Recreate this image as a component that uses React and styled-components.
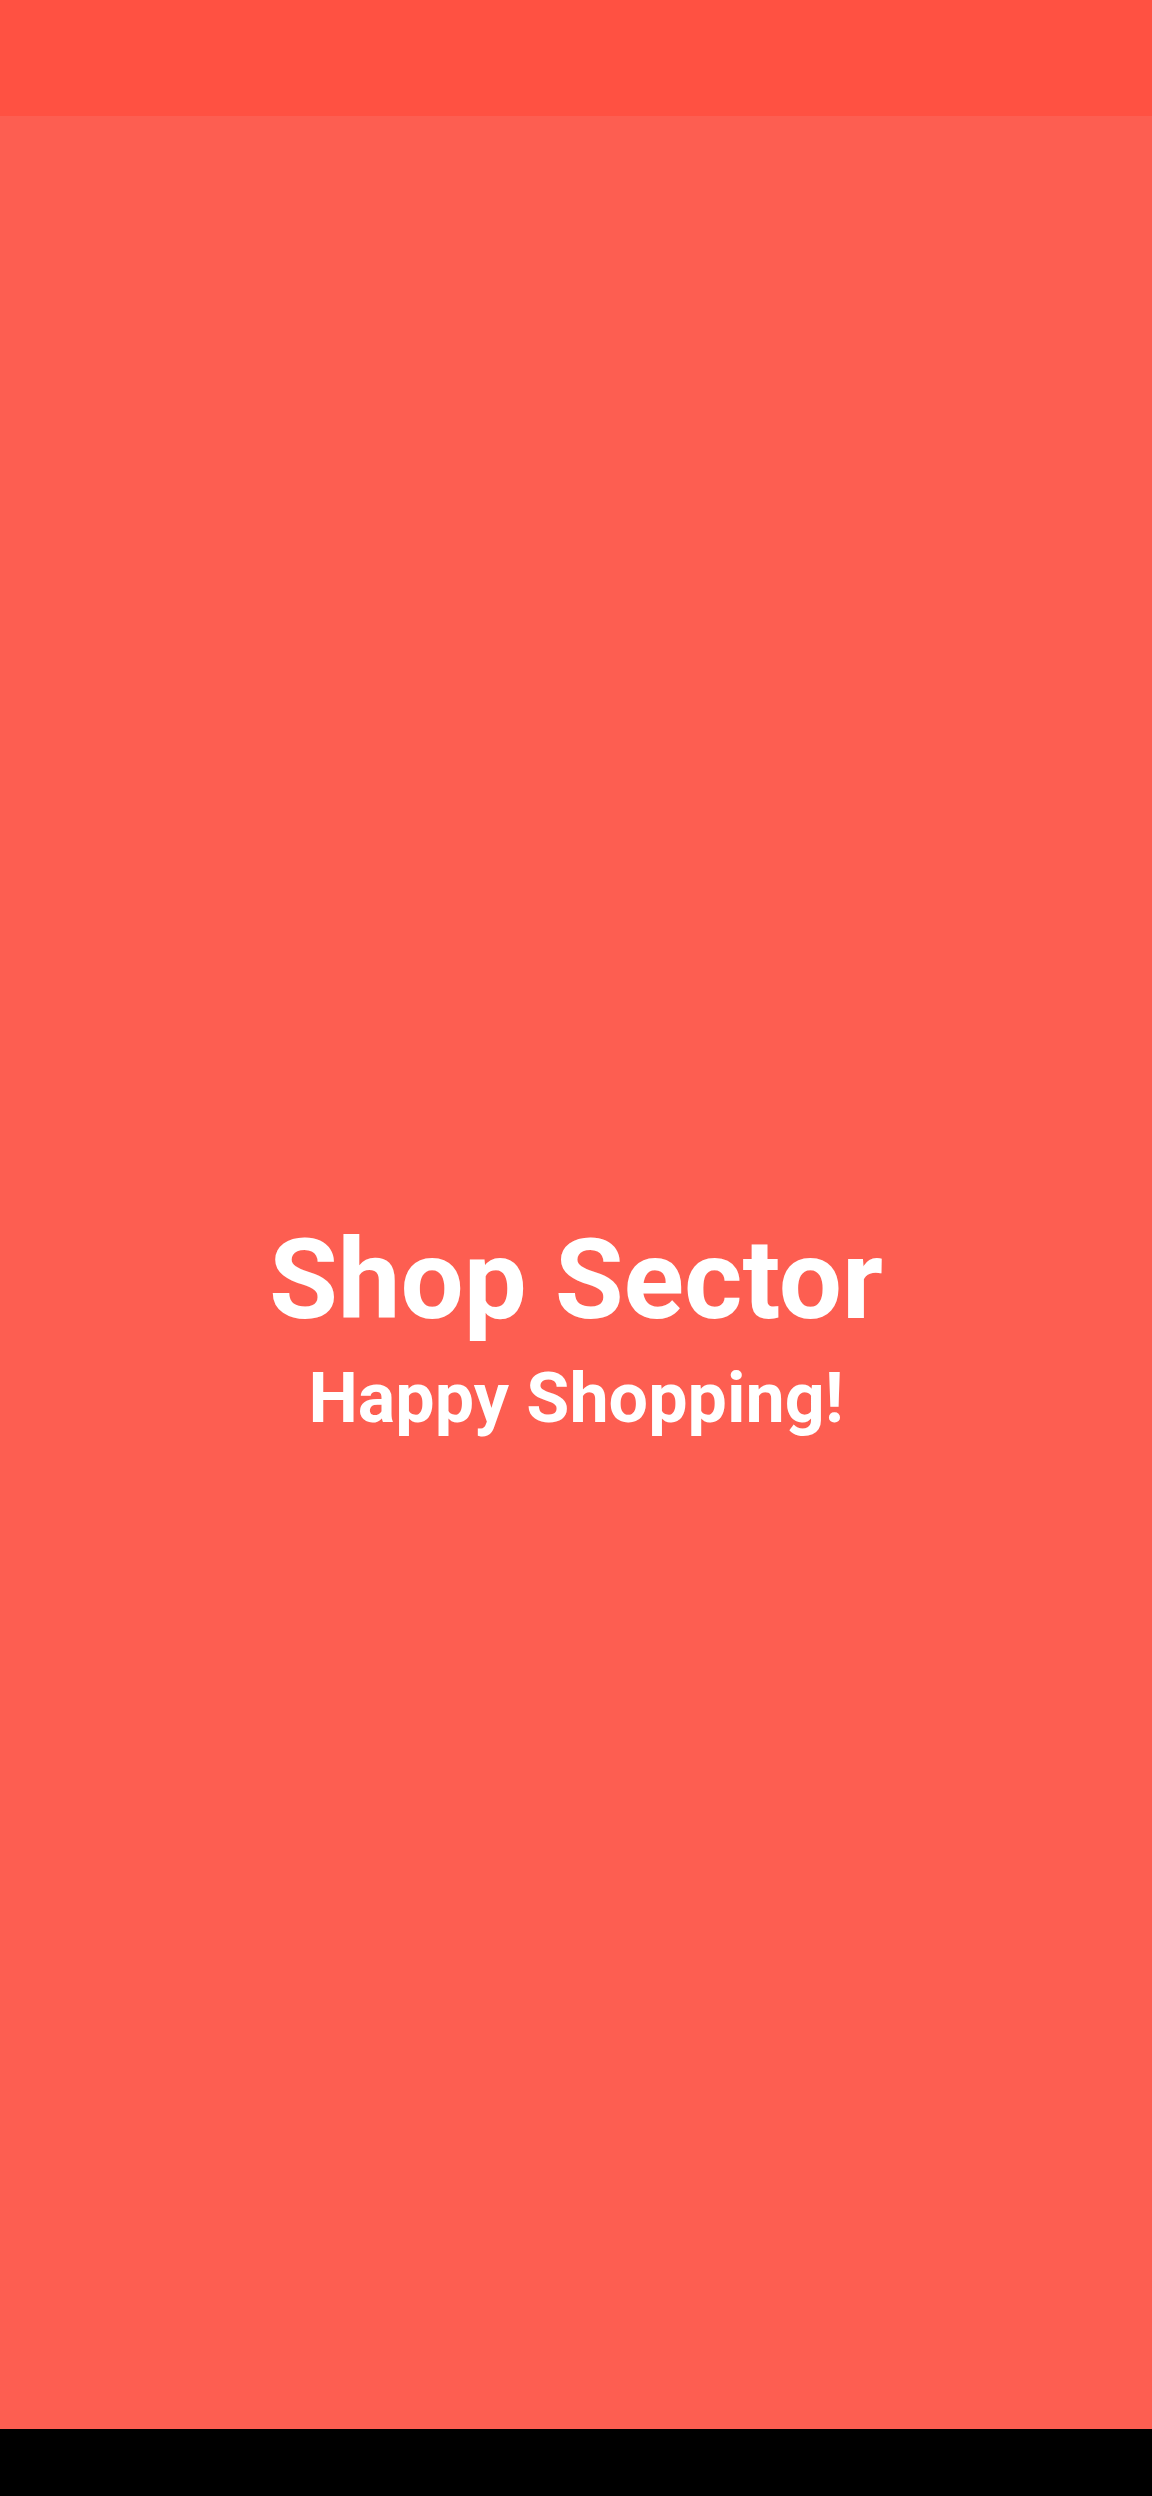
import React from 'react';
import styled, { createGlobalStyle } from 'styled-components';

const colors = {
  STATUS: '#FF5142',
  BODY: '#FD5E51',
  NAV: '#000000',
  TEXT: '#FFFFFF',
};

const GlobalStyle = createGlobalStyle`
  html, body {
    margin: 0;
    padding: 0;
    background: ${colors.NAV};
  }
  #root {
    min-height: 100vh;
  }
`;

const Screen = styled.div`
  height: 2496px;
  display: flex;
  flex-direction: column;
  font-family: Roboto, 'Liberation Sans', sans-serif;
`;

const StatusBar = styled.div`
  height: 116px;
  background-color: ${colors.STATUS};
`;

const Splash = styled.main`
  flex: 1;
  background-color: ${colors.BODY};
  display: flex;
  flex-direction: column;
  justify-content: center;
  align-items: center;
  padding-top: 108px;
  box-sizing: border-box;
`;

const Title = styled.h1`
  margin: 0;
  color: ${colors.TEXT};
  font-size: 112px;
  font-weight: 700;
  line-height: 1.172;
`;

const Tagline = styled.p`
  margin: 12px 0 0;
  color: ${colors.TEXT};
  font-size: 70px;
  font-weight: 700;
  line-height: 1.172;
`;

const NavBar = styled.div`
  height: 67px;
  background-color: ${colors.NAV};
`;

export default function App() {
  return (
    <>
      <GlobalStyle />
      <Screen>
        <StatusBar />
        <Splash>
          <Title>Shop Sector</Title>
          <Tagline>Happy Shopping!</Tagline>
        </Splash>
        <NavBar />
      </Screen>
    </>
  );
}
